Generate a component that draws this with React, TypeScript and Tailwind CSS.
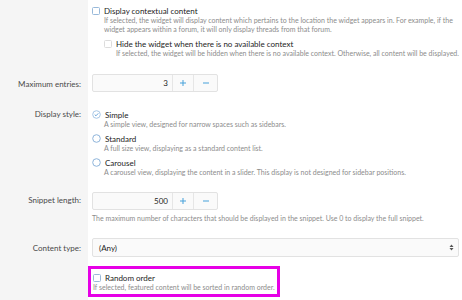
import { FC, ReactNode } from 'react';

const Checkbox: FC<{ muted?: boolean }> = ({ muted }) => (
    <span className={`inline-block w-[8px] h-[8px] rounded-[1.5px] border bg-white shrink-0 ${muted ? 'border-[#dcdcdc]' : 'border-[#98b9da]'}`} />
);

const Radio: FC<{ checked?: boolean }> = ({ checked }) => (
    <svg width="9" height="9" viewBox="0 0 9 9" className="shrink-0">
        <circle cx="4.5" cy="4.5" r="3.8" fill="white" stroke={checked ? '#a6c6e6' : '#8eb4da'} strokeWidth="1" />
        {checked && <path d="M2.7 4.6 L4 5.8 L6.3 3.3" fill="none" stroke="#5b9bd5" strokeWidth="0.9" />}
    </svg>
);

const Row: FC<{ label?: string; labelTop?: string; children: ReactNode; className?: string }> = ({ label, labelTop, children, className }) => (
    <div className={`flex ${className ?? ''}`}>
        <div className="w-[88px] shrink-0 bg-[#f5f5f5] text-right pr-[7px] text-[8px] leading-[11px] text-[#4a4a4a]">
            {label && <div className={labelTop}>{label}</div>}
        </div>
        <div className="flex-1 pl-[4px] pr-[3px]">{children}</div>
    </div>
);

const Desc: FC<{ lines: string[]; className?: string }> = ({ lines, className }) => (
    <div className={`text-[7px] leading-[9px] text-[#8c8c8c] ${className ?? ''}`}>
        {lines.map(line => <div key={line} className="whitespace-nowrap">{line}</div>)}
    </div>
);

const Stepper: FC<{ value: string }> = ({ value }) => (
    <div className="flex h-[18px] w-[126px] border border-[#e2e2e2] rounded-[2px] bg-[#fafafa] text-[8px]">
        <div className="flex-1 flex items-center justify-end pr-[4px] text-[#1d1d1d]">{value}</div>
        <div className="w-[21px] border-l border-[#e6e6e6] flex items-center justify-center">
            <svg width="6" height="6" viewBox="0 0 6 6">
                <path d="M3 0 V6 M0 3 H6" stroke="#47a1da" strokeWidth="1" />
            </svg>
        </div>
        <div className="w-[24px] border-l border-[#e6e6e6] flex items-center justify-center">
            <svg width="6" height="6" viewBox="0 0 6 6">
                <path d="M0 3 H6" stroke="#47a1da" strokeWidth="1" />
            </svg>
        </div>
    </div>
);

const Option: FC<{ title: string; children: ReactNode; checked?: boolean; className?: string }> = ({ title, children, checked, className }) => (
    <div className={className}>
        <div className="flex items-center h-[11px] gap-[4px] text-[8px] text-[#1d1d1d]">
            <Radio checked={checked} />
            <span>{title}</span>
        </div>
        <div className="pl-[12px]">{children}</div>
    </div>
);

const App: FC = () => {
    return (
        <div className="w-[462px] h-[300px] overflow-hidden bg-white" style={{ fontFamily: 'Lato, "Open Sans", sans-serif' }}>
            <Row className="h-[67px]">
                <div className="pt-[5px]">
                    <div className="flex items-center h-[11px] gap-[4px] text-[8px] text-[#1d1d1d]">
                        <Checkbox />
                        <span>Display contextual content</span>
                    </div>
                    <Desc
                        className="pl-[12px]"
                        lines={[
                            'If selected, the widget will display content which pertains to the location the widget appears in. For example, if the',
                            'widget appears within a forum, it will only display threads from that forum.',
                        ]}
                    />
                    <div className="pl-[12px] mt-[4px]">
                        <div className="flex items-center h-[11px] gap-[4px] text-[8px] text-[#1d1d1d]">
                            <Checkbox muted />
                            <span>Hide the widget when there is no available context</span>
                        </div>
                        <Desc
                            className="pl-[12px]"
                            lines={['If selected, the widget will be hidden when there is no available context. Otherwise, all content will be displayed.']}
                        />
                    </div>
                </div>
            </Row>

            <Row label="Maximum entries:" labelTop="pt-[12px]" className="h-[26px]">
                <div className="pt-[7px]">
                    <Stepper value="3" />
                </div>
            </Row>

            <Row label="Display style:" labelTop="pt-[16px]" className="h-[90px]">
                <div className="pt-[16px]">
                    <Option title="Simple" checked>
                        <Desc lines={['A simple view, designed for narrow spaces such as sidebars.']} />
                    </Option>
                    <Option title="Standard" className="mt-[4px]">
                        <Desc lines={['A full size view, displaying as a standard content list.']} />
                    </Option>
                    <Option title="Carousel" className="mt-[4px]">
                        <Desc lines={['A carousel view, displaying the content in a slider. This display is not designed for sidebar positions.']} />
                    </Option>
                </div>
            </Row>

            <Row label="Snippet length:" labelTop="pt-[12px]" className="h-[46px]">
                <div className="pt-[9px]">
                    <Stepper value="500" />
                    <Desc className="mt-[4px]" lines={['The maximum number of characters that should be displayed in the snippet. Use 0 to display the full snippet.']} />
                </div>
            </Row>

            <Row label="Content type:" labelTop="pt-[14px]" className="h-[31px]">
                <div className="pt-[9px]">
                    <div className="flex items-center justify-between h-[19px] w-[367px] border border-[#e2e2e2] rounded-[2px] bg-[#fafafa] pl-[6px] pr-[4px] text-[8px] text-[#1d1d1d]">
                        <span>(Any)</span>
                        <svg width="5" height="7" viewBox="0 0 5 7">
                            <path d="M0.5 3 L2.5 0.5 L4.5 3 Z" fill="#555" />
                            <path d="M0.5 4 L2.5 6.5 L4.5 4 Z" fill="#555" />
                        </svg>
                    </div>
                </div>
            </Row>

            <Row className="h-[40px]">
                <div className="pt-[6px] ml-[-4px]">
                    <div className="w-[192px] h-[31px] border-[3px] border-[#e600e6] pl-[2px]">
                        <div className="flex items-center h-[11px] gap-[4px] mt-[3px] text-[8px] text-[#1d1d1d]">
                            <Checkbox />
                            <span>Random order</span>
                        </div>
                        <Desc lines={['If selected, featured content will be sorted in random order.']} />
                    </div>
                </div>
            </Row>
        </div>
    );
};

export default App;
